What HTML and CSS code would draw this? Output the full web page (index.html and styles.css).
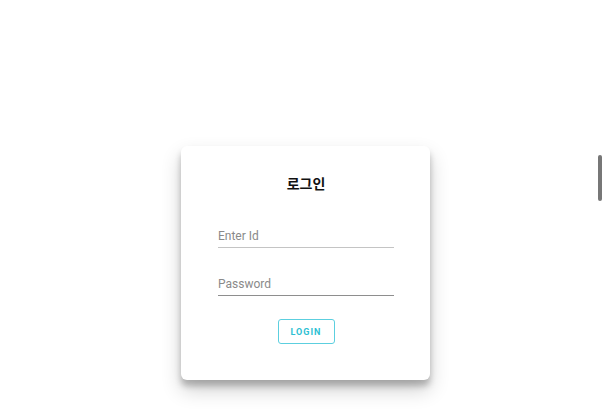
FILE: index.html
```html
<!DOCTYPE html>
<html lang="ko">
<head>
    <meta charset="UTF-8">
    <meta name="viewport" content="width=device-width, initial-scale=1.0">
    <title>로그인</title>
    <link rel="stylesheet" href="styles.css">
</head>
<body>
    <div class="page">
        <div class="login">
            <h2>로그인</h2>
            <div class="field">
                <input type="text" placeholder="Enter Id">
            </div>
            <div class="field dark">
                <input type="password" placeholder="Password">
            </div>
            <button class="btn">LOGIN</button>
        </div>
    </div>
    <div class="thumb"></div>
</body>
</html>
```

FILE: styles.css
```css
body{
    margin: 0;
    padding: 0;
    background: #fff;
    font-family: Roboto, "Noto Sans CJK KR", sans-serif;
}
.page{
    display: flex;
    justify-content: center;
    padding: 146px 0 36px 7px;
}
.login{
    width: 249px;
    height: 234px;
    box-sizing: border-box;
    background: #fff;
    border-radius: 6px;
    box-shadow: 0 10px 20px rgba(0, 0, 0, 0.19), 0 6px 6px rgba(0, 0, 0, 0.23);
    padding: 27px 36px 0 37px;
    display: flex;
    flex-direction: column;
    align-items: center;
}
.login h2{
    margin: 0 0 32px;
    font-family: "Noto Sans CJK KR", sans-serif;
    font-size: 14px;
    font-weight: 700;
    line-height: 20px;
    color: #111;
}
.field{
    width: 176px;
    margin-bottom: 25px;
}
.field input{
    width: 100%;
    box-sizing: border-box;
    border: none;
    border-bottom: 1px solid #c4c4c4;
    padding: 0 0 3px;
    font-family: Roboto, sans-serif;
    font-size: 12px;
    line-height: 16px;
    outline: none;
    background: transparent;
}
.field.dark input{
    border-bottom-color: #8e8e8e;
}
.field input::placeholder{
    color: #8a8a8a;
}
.field.dark{
    margin-bottom: 23px;
}
.btn{
    width: 57px;
    height: 25px;
    border: 1px solid #5ccfdf;
    border-radius: 3px;
    background: #fff;
    color: #2ebfd3;
    font-family: Roboto, sans-serif;
    font-weight: 700;
    font-size: 9px;
    letter-spacing: 1px;
    padding: 0;
}
.thumb{
    position: absolute;
    top: 155px;
    left: 598px;
    width: 4px;
    height: 46px;
    border-radius: 2px;
    background: #777;
}
```
